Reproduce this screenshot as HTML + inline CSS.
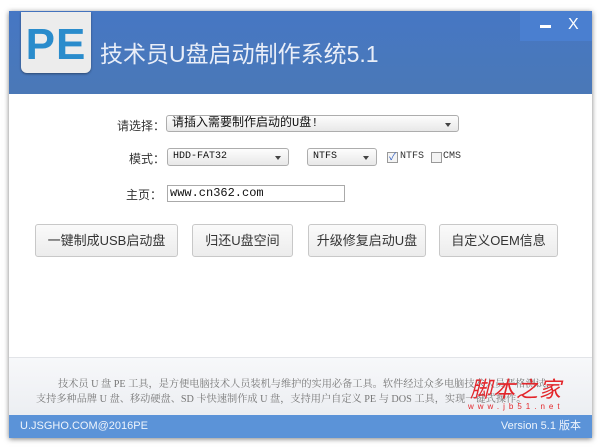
<!DOCTYPE html>
<html><head><meta charset="utf-8"><style>
*{margin:0;padding:0;box-sizing:border-box}
body{width:600px;height:448px;background:#fff;position:relative;overflow:hidden;font-family:"Liberation Sans","Noto Sans CJK SC",sans-serif}
.win{position:absolute;left:9px;top:11px;width:583px;height:427px;background:#fff;box-shadow:0 1px 5px rgba(0,0,0,.5)}
.hdr{position:absolute;left:0;top:0;width:583px;height:83px;background:linear-gradient(#4677c4,#4a78b7)}
.logo{position:absolute;left:12px;top:1px;width:70px;height:61px;background:#ececec;border-radius:0 0 6px 6px;box-shadow:0 1px 2px rgba(0,0,0,.4);color:#2a8ccc;font:bold 44px "Liberation Sans",sans-serif;text-align:center;line-height:66px;letter-spacing:1px}
.title{position:absolute;left:91px;top:24px;color:#e9eef8;font-size:23px;white-space:nowrap}
.ctl{position:absolute;right:0;top:0;width:72px;height:30px;background:#4a7fd0}
.min{position:absolute;left:20px;top:14px;width:11px;height:3px;background:#fff}
.x{position:absolute;left:48px;top:5px;color:#fff;font-size:16px}
.a{position:absolute;font-size:12px;color:#333;white-space:nowrap}
.sel{position:absolute;border:1px solid #adadad;border-radius:3px;background:linear-gradient(#fdfdfd,#e8e8e8);font:12px "Liberation Mono","Noto Sans CJK SC",monospace;color:#111;padding-left:5px;line-height:15px}
.sel:after{content:"";position:absolute;right:7px;top:7px;border:3px solid transparent;border-top:4px solid #444}
.cb{position:absolute;width:11px;height:11px;border:1px solid #999;background:#f4f4f4}
.btn{position:absolute;top:213px;height:33px;border:1px solid #c8c8c8;border-radius:3px;background:linear-gradient(#fafafa,#ececec);font-size:13px;color:#333;text-align:center;line-height:31px;white-space:nowrap}
.desc{position:absolute;left:0;top:346px;width:583px;height:58px;background:linear-gradient(#f7f8fa,#eceef2);border-top:1px solid #e2e4e8}
.dt{position:absolute;font-size:10.2px;color:#777;white-space:nowrap;font-family:"Liberation Serif","Noto Serif CJK SC",serif}
.bar{position:absolute;left:0;top:404px;width:583px;height:23px;background:#5b93d8;color:#eef4fc;font-size:11px;line-height:23px}
</style></head><body>
<div class="win">
<div class="hdr">
<div class="logo">PE</div>
<div class="title">技术员U盘启动制作系统5.1</div>
<div class="ctl"><div class="min"></div><div class="x">X</div></div>
</div>
<div class="a" style="left:108px;top:106px">请选择：</div>
<div class="sel" style="left:157px;top:104px;width:293px;height:17px">请插入需要制作启动的U盘!</div>
<div class="a" style="left:120px;top:139px">模式：</div>
<div class="sel" style="left:158px;top:137px;width:122px;height:18px;font-size:10px">HDD-FAT32</div>
<div class="sel" style="left:298px;top:137px;width:70px;height:18px;font-size:10px">NTFS</div>
<div class="cb" style="left:378px;top:141px;color:#3560c0;font-size:10px;line-height:9px;text-align:center">✓</div>
<div class="a" style="left:391px;top:140px;font-size:10px;font-family:'Liberation Mono',monospace">NTFS</div>
<div class="cb" style="left:422px;top:141px"></div>
<div class="a" style="left:434px;top:140px;font-size:10px;font-family:'Liberation Mono',monospace">CMS</div>
<div class="a" style="left:117px;top:175px">主页：</div>
<div style="position:absolute;left:158px;top:174px;width:178px;height:17px;border:1px solid #aaa;font:12px 'Liberation Mono',monospace;padding-left:2px;line-height:15px;color:#111">www.cn362.com</div>
<div class="btn" style="left:26px;width:143px">一键制成USB启动盘</div>
<div class="btn" style="left:183px;width:101px">归还U盘空间</div>
<div class="btn" style="left:299px;width:118px">升级修复启动U盘</div>
<div class="btn" style="left:430px;width:119px">自定义OEM信息</div>
<div class="desc">
<div class="dt" style="left:49px;top:17px">技术员 U 盘 PE 工具，是方便电脑技术人员装机与维护的实用必备工具。软件经过众多电脑技术人员严格测试，</div>
<div class="dt" style="left:27px;top:32px">支持多种品牌 U 盘、移动硬盘、SD 卡快速制作成 U 盘，支持用户自定义 PE 与 DOS 工具，实现一键式操作。</div>
<div style="position:absolute;left:461px;top:14px;color:#e3262b;font-size:22px;font-style:italic;letter-spacing:1px;white-space:nowrap">脚本之家</div>
<div style="position:absolute;left:459px;top:44px;color:#e3262b;font-size:8px;letter-spacing:4px;white-space:nowrap">www.jb51.net</div>
</div>
<div class="bar"><span style="position:absolute;left:11px">U.JSGHO.COM@2016PE</span><span style="position:absolute;right:11px">Version 5.1 版本</span></div>
</div>
</body></html>
